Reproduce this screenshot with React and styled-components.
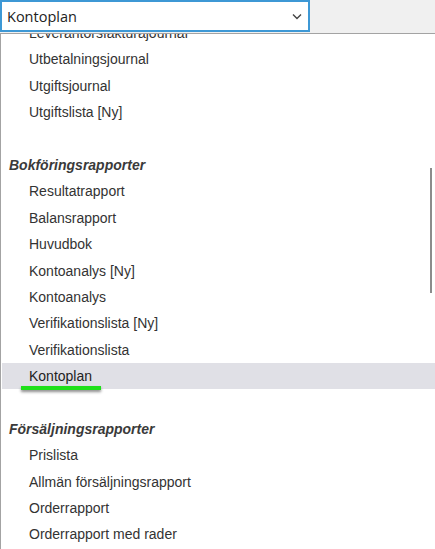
import React from "react";
import styled, { createGlobalStyle } from "styled-components";

const GlobalStyle = createGlobalStyle`
  html, body {
    margin: 0;
    padding: 0;
    background: #f0f0f0;
    overflow: hidden;
  }
  #root {
    height: 549px;
  }
`;

const Page = styled.div`
  width: 435px;
  height: 549px;
  display: flex;
  flex-direction: column;
`;

const SelectBox = styled.div`
  width: 310px;
  height: 32px;
  box-sizing: border-box;
  border: 2px solid #3d98d5;
  background: #fff;
  display: flex;
  align-items: center;
  justify-content: space-between;
  padding: 0 5px 0 5px;
  font-family: "Open Sans", "Noto Sans", sans-serif;
  font-size: 14.5px;
  color: #222;
`;

const Chevron = styled.svg`
  width: 10px;
  height: 7px;
  margin-right: 1px;
  margin-top: 1px;
`;

const Dropdown = styled.div`
  flex: 1;
  margin-top: 1px;
  position: relative;
  background: #fff;
  border-top: 1px solid #a3a3a3;
  border-left: 1px solid #a3a3a3;
  overflow: hidden;
`;

const List = styled.ul`
  list-style: none;
  margin: -14px 0 0 0;
  padding: 0 0 0 1px;
  font-family: "Liberation Sans", Arial, sans-serif;
  font-size: 14px;
  color: #333;
`;

const Row = styled.li`
  height: 26.4px;
  line-height: 26.4px;
  box-sizing: border-box;
  padding-left: ${(p) => (p.$header ? "7px" : "27px")};
  font-weight: ${(p) => (p.$header ? "bold" : "normal")};
  font-style: ${(p) => (p.$header ? "italic" : "normal")};
  color: ${(p) => (p.$header ? "#3a3a3a" : "#333")};
  background: ${(p) => (p.$active ? "#e0e0e6" : "transparent")};
  white-space: nowrap;
`;

const Marked = styled.span`
  position: relative;
  color: #222;

  &::after {
    content: "";
    position: absolute;
    left: -8px;
    right: -9px;
    bottom: -6px;
    height: 4px;
    background: #1fe01a;
    box-shadow: 0 2px 3px rgba(0, 0, 0, 0.45);
  }
`;

const Scrollbar = styled.div`
  position: absolute;
  top: 134px;
  right: 3px;
  width: 2px;
  height: 125px;
  background: #8c8c8c;
`;

const rows = [
  { label: "Leverantörsfakturajournal" },
  { label: "Utbetalningsjournal" },
  { label: "Utgiftsjournal" },
  { label: "Utgiftslista [Ny]" },
  { label: "" },
  { label: "Bokföringsrapporter", header: true },
  { label: "Resultatrapport" },
  { label: "Balansrapport" },
  { label: "Huvudbok" },
  { label: "Kontoanalys [Ny]" },
  { label: "Kontoanalys" },
  { label: "Verifikationslista [Ny]" },
  { label: "Verifikationslista" },
  { label: "Kontoplan", active: true },
  { label: "" },
  { label: "Försäljningsrapporter", header: true },
  { label: "Prislista" },
  { label: "Allmän försäljningsrapport" },
  { label: "Orderrapport" },
  { label: "Orderrapport med rader" },
];

export default function App() {
  return (
    <Page>
      <GlobalStyle />
      <SelectBox>
        <span>Kontoplan</span>
        <Chevron viewBox="0 0 10 7">
          <polyline
            points="1,1.5 5,5.5 9,1.5"
            fill="none"
            stroke="#444"
            strokeWidth="1.4"
          />
        </Chevron>
      </SelectBox>
      <Dropdown>
        <List>
          {rows.map((r, i) => (
            <Row key={i} $header={r.header} $active={r.active}>
              {r.active ? <Marked>{r.label}</Marked> : r.label || "\u00a0"}
            </Row>
          ))}
        </List>
        <Scrollbar />
      </Dropdown>
    </Page>
  );
}
